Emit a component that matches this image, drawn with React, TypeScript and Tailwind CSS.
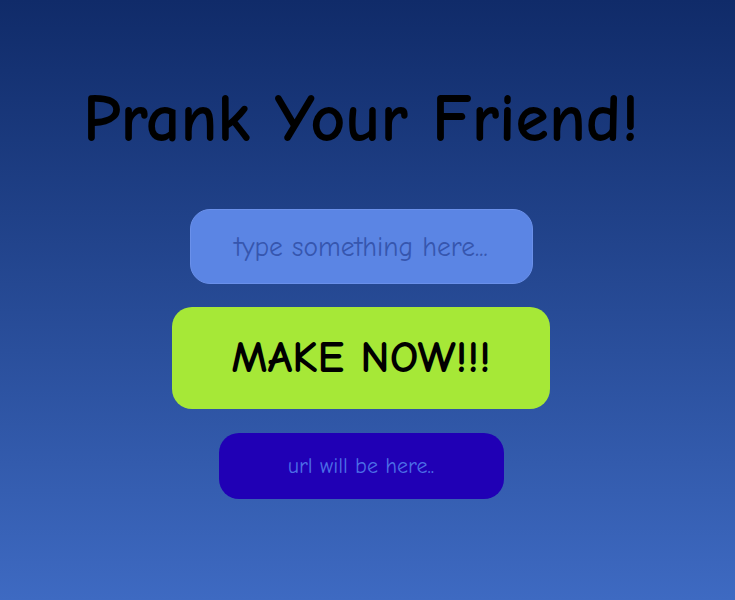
import { useState } from "react";

const comic = "font-['Comic_Sans_MS','Comic_Neue','DejaVu_Sans',sans-serif]";

export default function App() {
  const [text, setText] = useState("");

  return (
    <div
      className={`min-h-[600px] w-full bg-gradient-to-b from-[#102b69] to-[#3e6ac2] ${comic}`}
    >
      <div className="flex w-[722px] flex-col items-center pt-[80px]">
        <h1 className="text-[68px] font-bold leading-[78px] text-black">
          Prank Your Friend!
        </h1>
        <input
          value={text}
          onChange={(e) => setText(e.target.value)}
          placeholder="type something here..."
          className="mt-[51px] h-[75px] w-[343px] rounded-[20px] border border-[#6a90ea] bg-[#5b85e4] text-center text-[27.5px] text-[#1e3a8a] outline-none placeholder:text-[#3656ae]"
        />
        <button className="mt-[23px] h-[102px] w-[378px] rounded-[20px] bg-[#a6e837] text-[45px] font-bold text-black">
          MAKE NOW!!!
        </button>
        <div className="mt-[24px] flex h-[66px] w-[285px] items-center justify-center rounded-[20px] bg-[#2000b5] text-[22px] text-[#4c6ee6]">
          url will be here..
        </div>
      </div>
    </div>
  );
}
